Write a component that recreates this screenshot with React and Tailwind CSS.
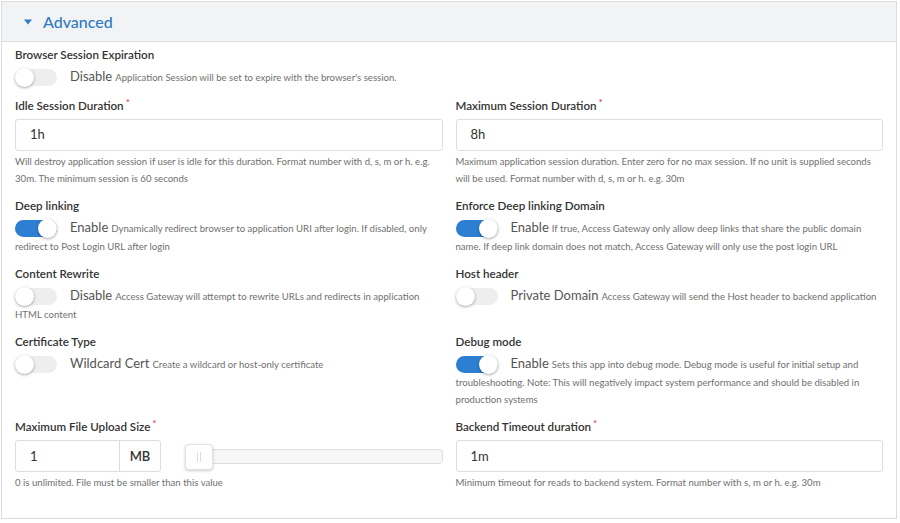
import React from "react";

function Req() {
  return <span className="text-[#e0465a] text-[10px] relative -top-[4px] ml-[2px]">*</span>;
}

function Label({ children, required }) {
  return (
    <div className="text-[11.6px] leading-4 font-semibold text-[#333] mb-[5px]">
      {children}
      {required && <Req />}
    </div>
  );
}

function Toggle({ on }) {
  return (
    <span
      className={`inline-block relative align-middle w-[42px] h-[17px] my-[1px] rounded-full mr-[13px] -mt-[1px] ${
        on ? "bg-[#2d7fd3]" : "bg-[#eeeeee]"
      }`}
    >
      <span
        className={`absolute top-[-1px] w-[19px] h-[19px] rounded-full bg-white shadow-[0_1px_3px_rgba(0,0,0,0.35)] ${
          on ? "right-0" : "left-0"
        }`}
      />
    </span>
  );
}

function ToggleField({ label, on, title, desc }) {
  return (
    <div>
      <Label>{label}</Label>
      <div className="leading-[17px] text-[9.6px] text-[#707070]">
        <Toggle on={on} />
        <span className="text-[13px] leading-[17px] text-[#555] mr-[3px]">{title}</span>
        {desc}
      </div>
    </div>
  );
}

function InputField({ label, value, help }) {
  return (
    <div>
      <Label required>{label}</Label>
      <div className="h-[32px] border border-[#ddd] rounded-[3px] flex items-center pl-[14px] text-[13px] text-[#333]">
        {value}
      </div>
      <div className="mt-[2px] text-[9.6px] leading-[17px] text-[#707070]">{help}</div>
    </div>
  );
}

export default function App() {
  return (
    <div className="w-[900px] h-[523px] bg-white font-['Lato','Liberation_Sans',sans-serif] pt-[1px] pl-[1px]">
      <div className="w-[896px] h-[518px] border border-[#dcdcdc]">
        <div className="h-[40px] bg-[#f2f3f5] border-b border-[#dcdcdc] flex items-center pl-[21px]">
          <svg width="10" height="6" viewBox="0 0 10 6" className="mr-[10px]">
            <path d="M1 0.5 L9 0.5 L5 5.5 Z" fill="#2f7cc4" />
          </svg>
          <span className="text-[16px] text-[#2f7cc4] font-medium">Advanced</span>
        </div>

        <div className="grid grid-cols-2 gap-x-[13px] gap-y-[11px] px-[13px] pt-[5px]">
          <ToggleField
            label="Browser Session Expiration"
            title="Disable"
            desc="Application Session will be set to expire with the browser's session."
          />
          <div />

          <InputField
            label="Idle Session Duration"
            value="1h"
            help="Will destroy application session if user is idle for this duration. Format number with d, s, m or h. e.g. 30m. The minimum session is 60 seconds"
          />
          <InputField
            label="Maximum Session Duration"
            value="8h"
            help="Maximum application session duration. Enter zero for no max session. If no unit is supplied seconds will be used. Format number with d, s, m or h. e.g. 30m"
          />

          <ToggleField
            label="Deep linking"
            on
            title="Enable"
            desc="Dynamically redirect browser to application URI after login. If disabled, only redirect to Post Login URL after login"
          />
          <ToggleField
            label="Enforce Deep linking Domain"
            on
            title="Enable"
            desc="If true, Access Gateway only allow deep links that share the public domain name. If deep link domain does not match, Access Gateway will only use the post login URL"
          />

          <ToggleField
            label="Content Rewrite"
            title="Disable"
            desc="Access Gateway will attempt to rewrite URLs and redirects in application HTML content"
          />
          <ToggleField
            label="Host header"
            title="Private Domain"
            desc="Access Gateway will send the Host header to backend application"
          />

          <ToggleField
            label="Certificate Type"
            title="Wildcard Cert"
            desc="Create a wildcard or host-only certificate"
          />
          <ToggleField
            label="Debug mode"
            on
            title="Enable"
            desc="Sets this app into debug mode. Debug mode is useful for initial setup and troubleshooting. Note: This will negatively impact system performance and should be disabled in production systems"
          />

          <div>
            <Label required>Maximum File Upload Size</Label>
            <div className="flex items-center">
              <div className="w-[146px] h-[32px] border border-[#ddd] rounded-[3px] flex text-[13px] text-[#333]">
                <div className="flex-1 flex items-center pl-[14px] border-r border-[#ddd]">1</div>
                <div className="w-[40px] flex items-center justify-center font-semibold">MB</div>
              </div>
              <div className="relative flex-1 ml-[24px] h-[15px] border border-[#ddd] rounded-[4px] bg-[#f7f7f7]">
                <div className="absolute left-[-1px] top-[-6px] w-[28px] h-[26px] bg-white border border-[#e2e2e2] rounded-[4px] shadow-[0_1px_3px_rgba(0,0,0,0.2)] flex items-center justify-center gap-[2px]">
                  <span className="w-px h-[10px] bg-[#ddd]" />
                  <span className="w-px h-[10px] bg-[#ddd]" />
                </div>
              </div>
            </div>
            <div className="mt-[2px] text-[9.6px] leading-[17px] text-[#707070]">
              0 is unlimited. File must be smaller than this value
            </div>
          </div>
          <InputField
            label="Backend Timeout duration"
            value="1m"
            help="Minimum timeout for reads to backend system. Format number with s, m or h. e.g. 30m"
          />
        </div>
      </div>
    </div>
  );
}
